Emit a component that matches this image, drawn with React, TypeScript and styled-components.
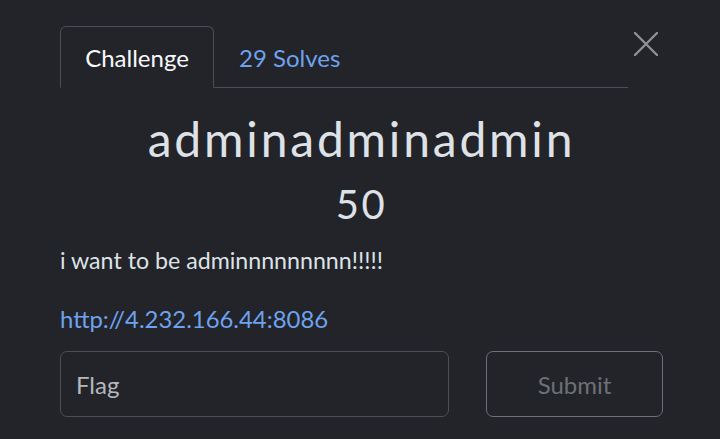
import React from "react";
import styled, { createGlobalStyle } from "styled-components";

const Global = createGlobalStyle`
  html, body { margin: 0; padding: 0; background: #222429; }
  body { font-family: Lato, "Open Sans", sans-serif; color: #dee2e6; }
  * { box-sizing: border-box; }
`;

const Modal = styled.div`
  width: 720px;
  height: 439px;
  background: #222429;
  padding: 26px 57px 0 60px;
  display: flex;
  flex-direction: column;
  overflow: hidden;
`;

const Header = styled.div`
  display: flex;
  align-items: flex-start;
`;

const Tabs = styled.div`
  flex: 0 0 568px;
  display: flex;
  border-bottom: 1px solid #4b4e54;
  height: 62px;
`;

const Tab = styled.div<{ $active?: boolean }>`
  height: 62px;
  padding: 0 24px;
  display: flex;
  align-items: center;
  font-size: 24px;
  border: 1px solid ${(p) => (p.$active ? "#4b4e54" : "transparent")};
  border-bottom: ${(p) => (p.$active ? "1px solid #222429" : "none")};
  border-radius: 6px 6px 0 0;
  margin-bottom: -1px;
  color: ${(p) => (p.$active ? "#f8f9fa" : "#6ea2ee")};
  width: ${(p) => (p.$active ? "154px" : "auto")};
  justify-content: center;
`;

const Close = styled.button`
  margin-left: 6px;
  margin-top: 6px;
  width: 24px;
  height: 24px;
  padding: 0;
  border: none;
  background: none;
  display: flex;
  align-items: center;
  justify-content: center;
`;

const Body = styled.div`
  width: 603px;
  display: flex;
  flex-direction: column;
`;

const Title = styled.h2`
  margin: 21px 0 0;
  text-align: center;
  font-size: 48px;
  font-weight: 400;
  letter-spacing: 2.8px;
  line-height: 60px;
  color: #dee2e6;
`;

const Value = styled.h3`
  margin: 11px 0 0;
  text-align: center;
  font-size: 40px;
  font-weight: 400;
  letter-spacing: 2.5px;
  line-height: 48px;
  color: #dee2e6;
`;

const Desc = styled.p`
  margin: 17px 0 0;
  font-size: 23.2px;
  line-height: 30px;
  color: #dee2e6;
`;

const Link = styled.a`
  display: block;
  margin-top: 29px;
  font-size: 23.9px;
  line-height: 30px;
  color: #6ea2ee;
  text-decoration: none;
`;

const FormRow = styled.div`
  margin-top: 17px;
  display: grid;
  grid-template-columns: 389px 177px;
  column-gap: 37px;
`;

const Input = styled.input`
  height: 66px;
  border: 1px solid #4b4e54;
  border-radius: 7px;
  background: transparent;
  padding: 0 15px;
  font-family: Lato, sans-serif;
  font-size: 24px;
  color: #dee2e6;
  outline: none;
  &::placeholder { color: #b4b8bd; }
`;

const Submit = styled.button`
  height: 66px;
  border: 1px solid #6c7077;
  border-radius: 7px;
  background: transparent;
  font-family: Lato, sans-serif;
  font-size: 24px;
  color: #6c7077;
`;

export default function App() {
  return (
    <>
      <Global />
      <Modal>
        <Header>
          <Tabs>
            <Tab $active>Challenge</Tab>
            <Tab>29 Solves</Tab>
          </Tabs>
          <Close aria-label="Close">
            <svg width="24" height="24" viewBox="0 0 24 24">
              <path d="M1 1L23 23M23 1L1 23" stroke="#8d9095" strokeWidth="2.4" strokeLinecap="round" />
            </svg>
          </Close>
        </Header>
        <Body>
          <Title>adminadminadmin</Title>
          <Value>50</Value>
          <Desc>i want to be adminnnnnnnnn!!!!!</Desc>
          <Link href="#">http://4.232.166.44:8086</Link>
          <FormRow>
            <Input placeholder="Flag" />
            <Submit>Submit</Submit>
          </FormRow>
        </Body>
      </Modal>
    </>
  );
}
